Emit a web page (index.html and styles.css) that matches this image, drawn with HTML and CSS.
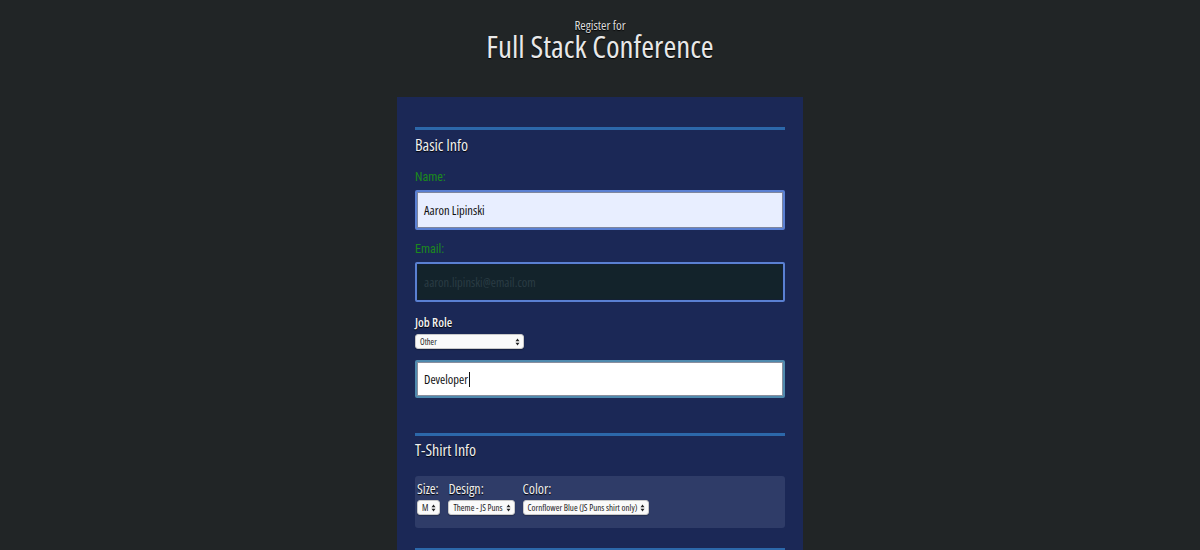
FILE: index.html
```html
<!DOCTYPE html>
<html lang="en">
<head>
<meta charset="utf-8">
<title>Register for Full Stack Conference</title>
<link rel="stylesheet" href="styles.css">
</head>
<body>
<header class="page-header">
  <span class="kicker">Register for</span>
  <h1 class="title">Full Stack Conference</h1>
</header>
<main class="panel">
  <section class="section">
    <h2 class="section-title">Basic Info</h2>
    <label class="label label-ok">Name:</label>
    <div class="field field-name">Aaron Lipinski</div>
    <label class="label label-ok">Email:</label>
    <div class="field field-email">aaron.lipinski@email.com</div>
    <label class="label label-strong">Job Role</label>
    <div class="select select-role"><span>Other</span><svg class="arrows" viewBox="0 0 6 10" width="5" height="8"><path d="M3 0.5 L5.5 4 H0.5 Z M3 9.5 L5.5 6 H0.5 Z" fill="#222"/></svg></div>
    <div class="field field-other">Developer<span class="caret"></span></div>
  </section>
  <section class="section section-shirt">
    <h2 class="section-title">T-Shirt Info</h2>
    <div class="shirt-box">
      <div class="shirt-col">
        <span class="shirt-label">Size:</span>
        <div class="select select-size"><span>M</span><svg class="arrows" viewBox="0 0 6 10" width="5" height="8"><path d="M3 0.5 L5.5 4 H0.5 Z M3 9.5 L5.5 6 H0.5 Z" fill="#222"/></svg></div>
      </div>
      <div class="shirt-col">
        <span class="shirt-label">Design:</span>
        <div class="select"><span>Theme - JS Puns</span><svg class="arrows" viewBox="0 0 6 10" width="5" height="8"><path d="M3 0.5 L5.5 4 H0.5 Z M3 9.5 L5.5 6 H0.5 Z" fill="#222"/></svg></div>
      </div>
      <div class="shirt-col">
        <span class="shirt-label">Color:</span>
        <div class="select"><span>Cornflower Blue (JS Puns shirt only)</span><svg class="arrows" viewBox="0 0 6 10" width="5" height="8"><path d="M3 0.5 L5.5 4 H0.5 Z M3 9.5 L5.5 6 H0.5 Z" fill="#222"/></svg></div>
      </div>
    </div>
  </section>
  <section class="section section-next"></section>
</main>
</body>
</html>
```

FILE: styles.css
```css
* { box-sizing: border-box; }
html, body { height: 100%; }
body {
  margin: 0;
  background: #212526;
  font-family: "Open Sans", "DejaVu Sans Condensed", sans-serif;
  font-stretch: 75%;
  color: #e6e6e6;
  overflow: hidden;
}
.page-header {
  display: flex;
  flex-direction: column;
  align-items: center;
  padding-top: 19px;
  height: 97px;
}
.kicker {
  font-size: 13px;
  line-height: 13px;
  color: #dcdcdc;
  text-shadow: 0 1px 1px #000;
}
.title {
  margin: 0;
  font-size: 31px;
  line-height: 28px;
  font-weight: normal;
  color: #e8e8e8;
  text-shadow: 0 1px 1px #000;
}
.panel {
  width: 406px;
  margin: 0 auto;
  background: #1b2856;
  padding: 30px 18px 0;
  min-height: 460px;
}
.section {
  border-top: 3px solid #2c68aa;
  display: flex;
  flex-direction: column;
  align-items: flex-start;
}
.section-title {
  margin: 5px 0 15px;
  font-size: 16px;
  line-height: 20px;
  font-weight: normal;
  color: #f0f0f0;
  text-shadow: 0 1px 1px #000;
}
.label {
  font-family: Roboto, "Open Sans", sans-serif;
  font-stretch: 75%;
  font-size: 12px;
  line-height: 14px;
  margin-bottom: 6px;
}
.label-ok { color: #1c8a1c; }
.label-strong {
  font-family: "Open Sans", sans-serif;
  font-size: 12.5px;
  color: #f2f2f2;
  font-weight: 600;
  margin-bottom: 4px;
  text-shadow: 0 1px 1px #000;
}
.field {
  width: 100%;
  height: 40px;
  border: 2px solid #5a80d2;
  border-radius: 2px;
  padding: 0 7px;
  display: flex;
  align-items: center;
  font-size: 12.5px;
  color: #111;
  margin-bottom: 12px;
  box-shadow: inset 0 0 0 1px rgba(20, 30, 60, 0.5);
}
.field-name { background: #e8eeff; }
.field-email { background: #13232b; color: #2a3c44; margin-bottom: 14px; }
.field-other {
  background: #ffffff;
  border-color: #4f8aae;
  height: 38px;
  margin-bottom: 35px;
}
.caret {
  display: inline-block;
  width: 1px;
  height: 15px;
  background: #111;
  margin-left: 1px;
}
.select {
  display: inline-flex;
  align-items: center;
  justify-content: space-between;
  gap: 3px;
  height: 15px;
  padding: 0 3px 0 4px;
  background: #fafafa;
  border-radius: 3px;
  border: 1px solid #c9c9c9;
  box-shadow: 0 1px 1px rgba(0, 0, 0, 0.25);
  font-size: 9px;
  color: #222;
  white-space: nowrap;
}
.select-role { width: 109px; margin-bottom: 11px; font-size: 8.5px; }
.select-size { min-width: 23px; }
.arrows { flex: none; }
.section-shirt .section-title { margin-top: 4px; margin-bottom: 16px; }
.shirt-box {
  width: 100%;
  height: 52px;
  background: #2f3c68;
  border-radius: 3px;
  padding: 4px 2px;
  display: flex;
  gap: 8px;
  margin-bottom: 20px;
}
.shirt-col {
  display: flex;
  flex-direction: column;
  align-items: flex-start;
  gap: 3px;
}
.shirt-label {
  font-size: 14px;
  line-height: 17px;
  color: #f0f0f0;
  text-shadow: 0 1px 1px #000;
}
.section-next { height: 10px; }
```
